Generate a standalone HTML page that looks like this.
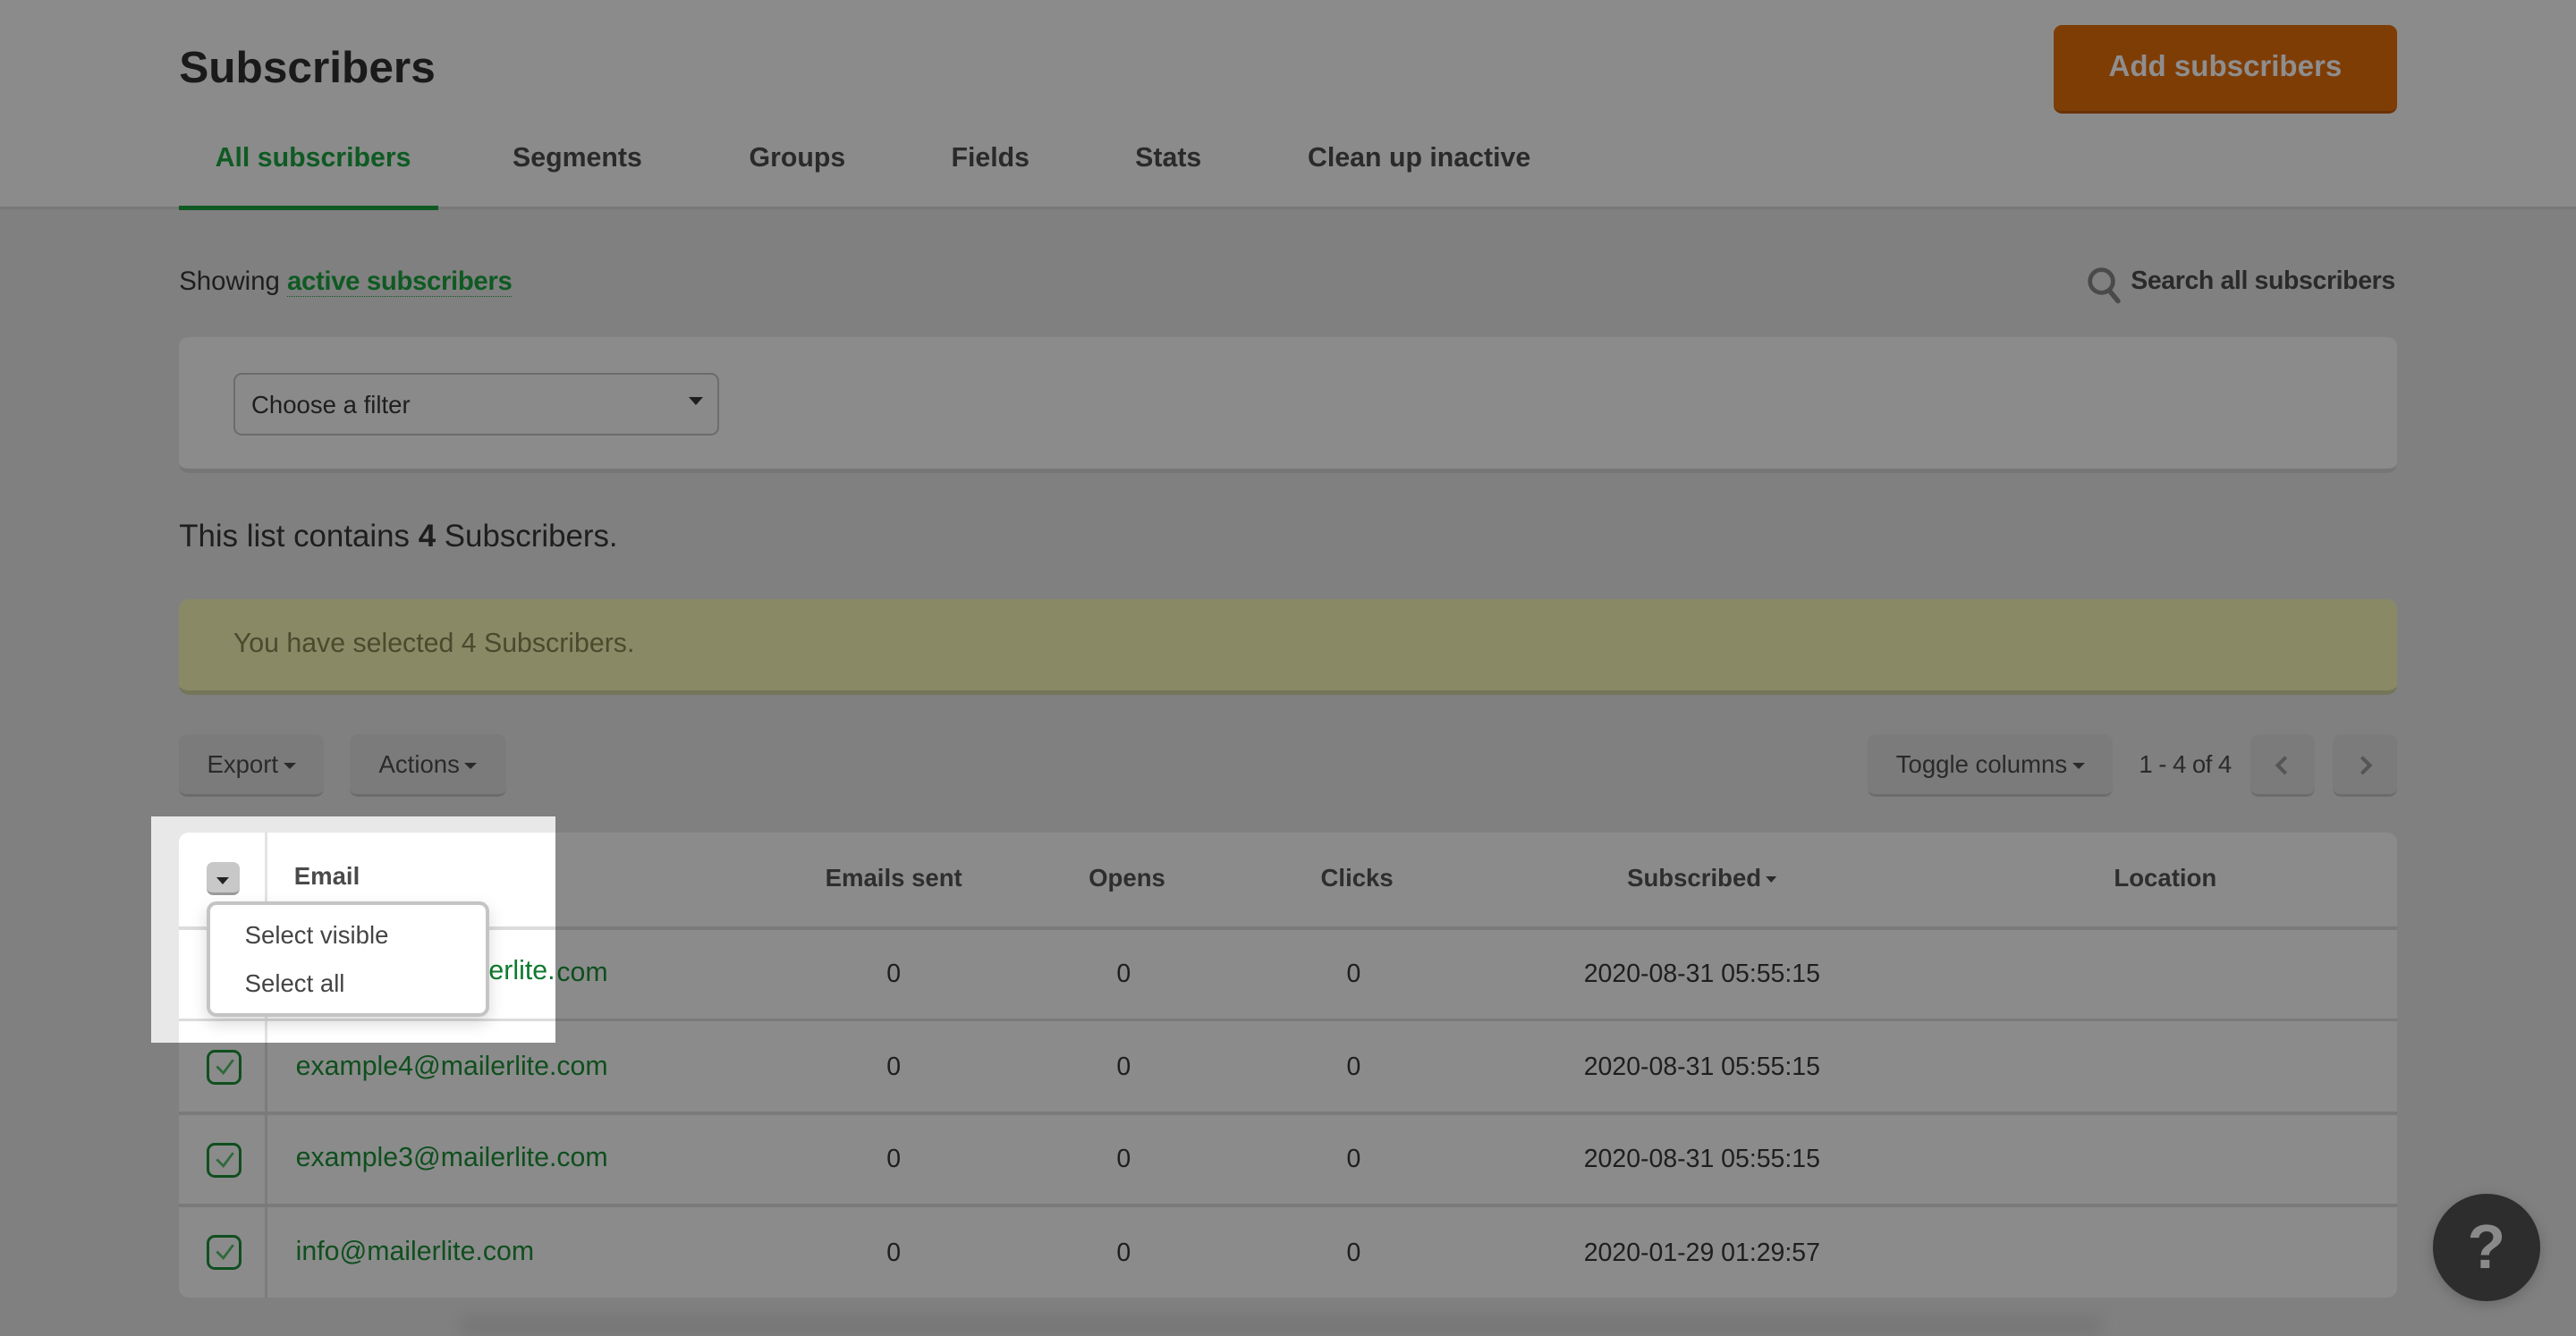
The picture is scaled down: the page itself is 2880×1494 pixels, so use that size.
<!DOCTYPE html>
<html><head><meta charset="utf-8"><style>
html,body{margin:0;padding:0;}
html{width:2880px;height:1494px;overflow:hidden;background:#808080;}
body{zoom:1.83673;width:1568px;height:813px;position:relative;font-family:"Liberation Sans",Arial,sans-serif;color:#1e1e1e;}
.a{position:absolute;}
.hdr{left:0;top:0;width:1568px;height:126px;background:#8b8b8b;border-bottom:2px solid #787878;}
.tab{top:87px;font-size:16.5px;font-weight:bold;color:#2a2a2a;}
.btn{background:#7b7b7b;border-radius:5px;border-bottom:2px solid #6c6c6c;box-sizing:border-box;font-size:15px;color:#2a2a2a;text-align:center;line-height:37px;}
.car{display:inline-block;width:0;height:0;border-left:4px solid transparent;border-right:4px solid transparent;border-top:4px solid #2a2a2a;vertical-align:middle;margin-left:3px;}
.tbl{left:109px;top:507px;width:1350px;height:283px;background:#8b8b8b;border-radius:6px;overflow:hidden;}
.hl{top:0;height:2px;background:#7a7a7a;left:0;width:1350px;}
.th{font-size:15px;font-weight:bold;color:#2e2e2e;top:19px;transform:translateX(-50%);white-space:nowrap;}
.td{font-size:15.5px;color:#1e1e1e;transform:translateX(-50%);white-space:nowrap;}
.em{font-size:16.5px;color:#0f4f1e;left:71px;}
.cb{left:17px;width:18px;height:18px;border:2px solid #0f4f1e;border-radius:5px;}
</style></head><body>
<div class="a hdr"></div>
<div class="a" style="left:109px;top:25px;font-size:27px;font-weight:bold;color:#1a1a1a;">Subscribers</div>
<div class="a" style="left:1250px;top:15px;width:209px;height:54px;background:#7f3d06;border-radius:5px;border-bottom:2px solid #6a3204;box-sizing:border-box;text-align:center;line-height:51px;font-size:18px;font-weight:bold;color:#8e8e8e;">Add subscribers</div>
<div class="a tab" style="left:131px;color:#0f5a23;">All subscribers</div>
<div class="a" style="left:109px;top:125px;width:158px;height:3px;background:#0f5a23;"></div>
<div class="a tab" style="left:312px;">Segments</div>
<div class="a tab" style="left:456px;">Groups</div>
<div class="a tab" style="left:579px;">Fields</div>
<div class="a tab" style="left:691px;">Stats</div>
<div class="a tab" style="left:796px;">Clean up inactive</div>

<div class="a" style="left:109px;top:162px;font-size:16px;color:#1e1e1e;">Showing <span style="color:#0f5a23;font-weight:bold;border-bottom:1px dotted #0f5a23;letter-spacing:-0.2px;">active subscribers</span></div>
<svg class="a" style="left:1270px;top:162px" width="22" height="24" viewBox="0 0 22 24"><circle cx="9" cy="9" r="7" fill="none" stroke="#4a4a4a" stroke-width="2.6"/><line x1="14" y1="15" x2="19" y2="21" stroke="#4a4a4a" stroke-width="3" stroke-linecap="round"/></svg>
<div class="a" style="left:1297px;top:162px;font-size:15.5px;font-weight:bold;color:#2a2a2a;letter-spacing:-0.2px;">Search all subscribers</div>

<div class="a" style="left:109px;top:205px;width:1350px;height:83px;background:#8b8b8b;border-radius:6px;border-bottom:3px solid #767676;box-sizing:border-box;"></div>
<div class="a" style="left:142px;top:227px;width:296px;height:38px;border:1.5px solid #6c6c6c;border-radius:5px;box-sizing:border-box;background:#8a8a8a;"></div>
<div class="a" style="left:153px;top:238px;font-size:15px;color:#1e1e1e;">Choose a filter</div>
<div class="a" style="left:419px;top:242px;border-left:4.5px solid transparent;border-right:4.5px solid transparent;border-top:5px solid #1e1e1e;"></div>

<div class="a" style="left:109px;top:316px;font-size:19px;color:#1e1e1e;">This list contains <b>4</b> Subscribers.</div>

<div class="a" style="left:109px;top:365px;width:1350px;height:58px;background:#898966;border-radius:6px;border-bottom:3px solid #75755a;box-sizing:border-box;"></div>
<div class="a" style="left:142px;top:383px;font-size:16.5px;color:#4a4a2e;">You have selected 4 Subscribers.</div>

<div class="a btn" style="left:109px;top:447px;width:88px;height:38px;">Export<span class="car"></span></div>
<div class="a btn" style="left:213px;top:447px;width:95px;height:38px;">Actions<span class="car"></span></div>
<div class="a btn" style="left:1137px;top:447px;width:149px;height:38px;">Toggle columns<span class="car"></span></div>
<div class="a" style="left:1302px;top:457px;font-size:15px;color:#2a2a2a;letter-spacing:-0.3px;">1 - 4 of 4</div>
<div class="a btn" style="left:1370px;top:447px;width:39px;height:38px;"><svg width="12" height="14" style="margin-top:12px" viewBox="0 0 12 14"><path d="M8 2 L3 7 L8 12" fill="none" stroke="#555" stroke-width="2.2"/></svg></div>
<div class="a btn" style="left:1420px;top:447px;width:39px;height:38px;"><svg width="12" height="14" style="margin-top:12px" viewBox="0 0 12 14"><path d="M4 2 L9 7 L4 12" fill="none" stroke="#555" stroke-width="2.2"/></svg></div>

<div class="a tbl">
  <div class="a" style="left:52px;top:0;width:2px;height:283px;background:#7c7c7c;"></div>
  <div class="a hl" style="top:57px"></div>
  <div class="a hl" style="top:113px"></div>
  <div class="a hl" style="top:170px"></div>
  <div class="a hl" style="top:226px"></div>
  <div class="a th" style="left:435px">Emails sent</div>
  <div class="a th" style="left:577px">Opens</div>
  <div class="a th" style="left:717px">Clicks</div>
  <div class="a th" style="left:927px">Subscribed<span class="car" style="border-width:4px 3.5px 0"></span></div>
  <div class="a th" style="left:1209px">Location</div>

  <div class="a em" style="top:76px;">example5@mailerlite.com</div>
  <div class="a em" style="top:133px;">example4@mailerlite.com</div>
  <div class="a em" style="top:189px;">example3@mailerlite.com</div>
  <div class="a em" style="top:246px;">info@mailerlite.com</div>
  <div class="a cb" style="top:75px"></div>
  <div class="a cb" style="top:132px"></div>
  <div class="a cb" style="top:189px"></div>
  <div class="a cb" style="top:245px"></div>
  <svg class="a" style="left:19px;top:133px" width="18" height="18"><path d="M4 9 L8 13 L14 5" fill="none" stroke="#2e6a3a" stroke-width="1.5"/></svg>
  <svg class="a" style="left:19px;top:190px" width="18" height="18"><path d="M4 9 L8 13 L14 5" fill="none" stroke="#2e6a3a" stroke-width="1.5"/></svg>
  <svg class="a" style="left:19px;top:246px" width="18" height="18"><path d="M4 9 L8 13 L14 5" fill="none" stroke="#2e6a3a" stroke-width="1.5"/></svg>

  <div class="a td" style="left:435px;top:77px">0</div><div class="a td" style="left:575px;top:77px">0</div><div class="a td" style="left:715px;top:77px">0</div><div class="a td" style="left:927px;top:77px">2020-08-31 05:55:15</div>
  <div class="a td" style="left:435px;top:134px">0</div><div class="a td" style="left:575px;top:134px">0</div><div class="a td" style="left:715px;top:134px">0</div><div class="a td" style="left:927px;top:134px">2020-08-31 05:55:15</div>
  <div class="a td" style="left:435px;top:190px">0</div><div class="a td" style="left:575px;top:190px">0</div><div class="a td" style="left:715px;top:190px">0</div><div class="a td" style="left:927px;top:190px">2020-08-31 05:55:15</div>
  <div class="a td" style="left:435px;top:247px">0</div><div class="a td" style="left:575px;top:247px">0</div><div class="a td" style="left:715px;top:247px">0</div><div class="a td" style="left:927px;top:247px">2020-01-29 01:29:57</div>
</div>

<!-- highlight -->
<div class="a" style="left:92px;top:497px;width:246px;height:138px;background:#e8e8e8;overflow:hidden;">
  <div class="a" style="left:17px;top:10px;width:229px;height:140px;background:#fff;border-top-left-radius:6px;"></div>
  <div class="a" style="left:69px;top:10px;width:2px;height:140px;background:#e4e4e4;"></div>
  <div class="a" style="left:17px;top:67px;width:229px;height:2px;background:#dcdcdc;"></div>
  <div class="a" style="left:17px;top:123px;width:229px;height:2px;background:#dcdcdc;"></div>
  <div class="a" style="left:87px;top:85px;font-size:16.5px;color:#0f7a2e;">example5@mailerlite.com</div>
  <div class="a" style="left:87px;top:28px;font-size:15px;font-weight:bold;color:#4a4a4a;">Email</div>
  <div class="a" style="left:34px;top:28px;width:20px;height:20px;background:#c8c8c8;border-radius:4px;border-bottom:2px solid #9a9a9a;box-sizing:border-box;"></div>
  <div class="a" style="left:40px;top:37px;border-left:4px solid transparent;border-right:4px solid transparent;border-top:4.5px solid #222;"></div>
  <div class="a" style="left:34px;top:52px;width:172px;height:70px;background:#fff;border:2.5px solid #c4c4c4;border-radius:6px;box-sizing:border-box;box-shadow:0 4px 10px rgba(0,0,0,0.15);"></div>
  <div class="a" style="left:57px;top:64px;font-size:15px;color:#444;">Select visible</div>
  <div class="a" style="left:57px;top:93px;font-size:15px;color:#444;">Select all</div>
</div>

<div class="a" style="left:1481px;top:727px;width:65px;height:65px;border-radius:50%;background:#2d2d2d;box-shadow:0 2px 8px rgba(0,0,0,0.2);color:#8a8a8a;font-size:38px;font-weight:bold;text-align:center;line-height:65px;">?</div>
<div class="a" style="left:280px;top:800px;width:1000px;height:13px;background:linear-gradient(#7a7a7a,#757575);filter:blur(4px);"></div>
</body></html>
